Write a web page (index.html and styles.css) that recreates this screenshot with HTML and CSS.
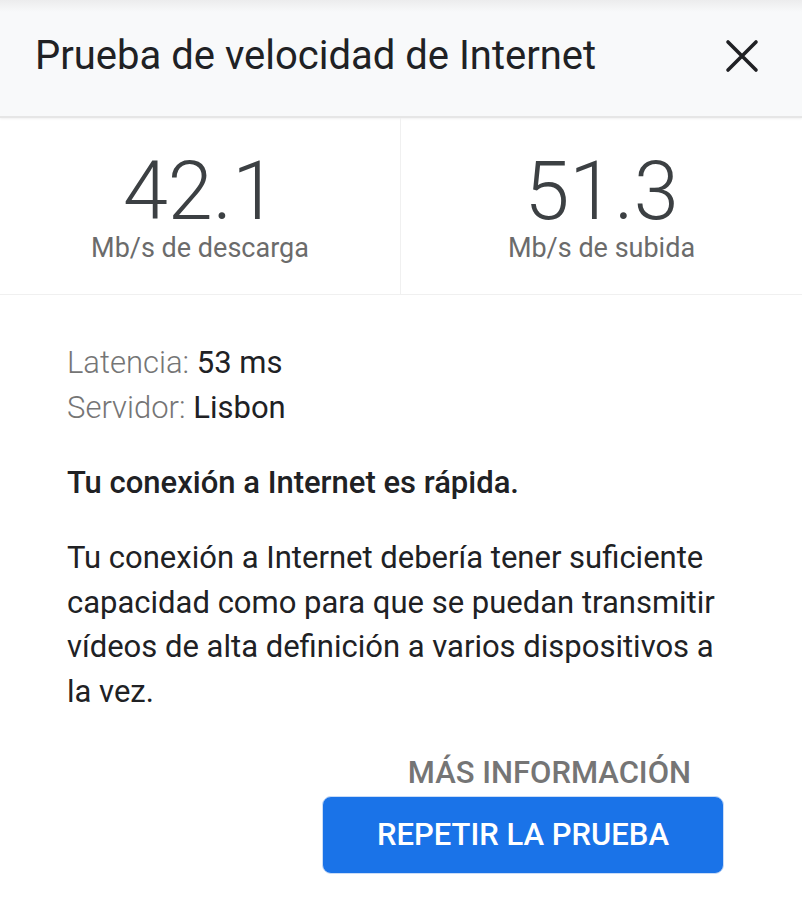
FILE: index.html
```html
<!DOCTYPE html>
<html lang="es">
<head>
    <meta charset="UTF-8">
    <meta name="viewport" content="width=device-width, initial-scale=1.0">
    <title>Prueba de velocidad de Internet</title>
    <link rel="stylesheet" href="styles.css">
</head>
<body>
    <div class="header">
        <h1 class="title">Prueba de velocidad de Internet</h1>
        <button class="close" aria-label="Cerrar">
            <svg width="34" height="34" viewBox="0 0 34 34">
                <path d="M3 3 L31 31 M31 3 L3 31" stroke="#202124" stroke-width="3.6" stroke-linecap="round" fill="none"/>
            </svg>
        </button>
    </div>

    <!-- Resultados de la prueba -->
    <div class="stats">
        <div class="stat">
            <div class="stat-value">42.1</div>
            <div class="stat-label">Mb/s de descarga</div>
        </div>
        <div class="stat">
            <div class="stat-value">51.3</div>
            <div class="stat-label">Mb/s de subida</div>
        </div>
    </div>

    <div class="content">
        <div class="meta">
            <div><span class="meta-key">Latencia:</span> 53 ms</div>
            <div><span class="meta-key">Servidor:</span> Lisbon</div>
        </div>

        <p class="verdict">Tu conexión a Internet es rápida.</p>

        <p class="desc">Tu conexión a Internet debería tener suficiente capacidad como para que se puedan transmitir vídeos de alta definición a varios dispositivos a la vez.</p>

        <div class="actions">
            <a class="more" href="#">MÁS INFORMACIÓN</a>
            <button class="retry">REPETIR LA PRUEBA</button>
        </div>
    </div>
</body>
</html>
```

FILE: styles.css
```css
body {
    font-family: Roboto, "Noto Sans", Arial, sans-serif;
    background-color: #fff;
    color: #202124;
    margin: 0;
}

.header {
    height: 118px;
    box-sizing: border-box;
    background: linear-gradient(#ececed 0, #f8f9fa 12px);
    display: flex;
    align-items: center;
    justify-content: space-between;
    padding: 0 43px 5px 35px;
    border-bottom: 2px solid #e6e6e6;
    box-shadow: 0 1px 2px rgba(0, 0, 0, 0.06);
}

.title {
    font-size: 40px;
    font-weight: 400;
    margin: 0;
    line-height: 48px;
}

.close {
    background: none;
    border: none;
    padding: 0;
    width: 34px;
    height: 34px;
    cursor: pointer;
}

.stats {
    display: grid;
    grid-template-columns: 401px 1fr;
    border-bottom: 1px solid #f0f0f0;
}

.stat {
    height: 176px;
    display: flex;
    flex-direction: column;
    align-items: center;
    padding-top: 34px;
    box-sizing: border-box;
}

.stat:first-child {
    border-right: 1px solid #f0f0f0;
}

.stat-value {
    font-size: 81px;
    font-weight: 300;
    line-height: 80px;
    color: #3c4043;
}

.stat-label {
    font-size: 27px;
    color: #6b6b6b;
    line-height: 32px;
}

.content {
    padding: 45px 67px 0 67px;
}

.meta {
    font-size: 31px;
    line-height: 45px;
}

.meta-key {
    font-weight: 300;
    color: #757575;
}

.verdict {
    font-size: 31px;
    font-weight: 500;
    margin: 33px 0 0 0;
    line-height: 40px;
}

.desc {
    font-size: 31px;
    line-height: 44.7px;
    margin: 33px 0 0 0;
}

.actions {
    display: flex;
    flex-direction: column;
    align-items: flex-end;
    margin-right: 11px;
    margin-top: 38px;
}

.more {
    font-size: 31px;
    font-weight: 500;
    color: #757575;
    text-decoration: none;
    margin-right: 33px;
    line-height: 40px;
}

.retry {
    margin-top: 3px;
    width: 402px;
    height: 78px;
    background-color: #1a73e8;
    color: #fff;
    border: 1px solid #c9dcf7;
    border-radius: 9px;
    font-family: Roboto, "Noto Sans", Arial, sans-serif;
    font-size: 31px;
    font-weight: 500;
    cursor: pointer;
}
```
